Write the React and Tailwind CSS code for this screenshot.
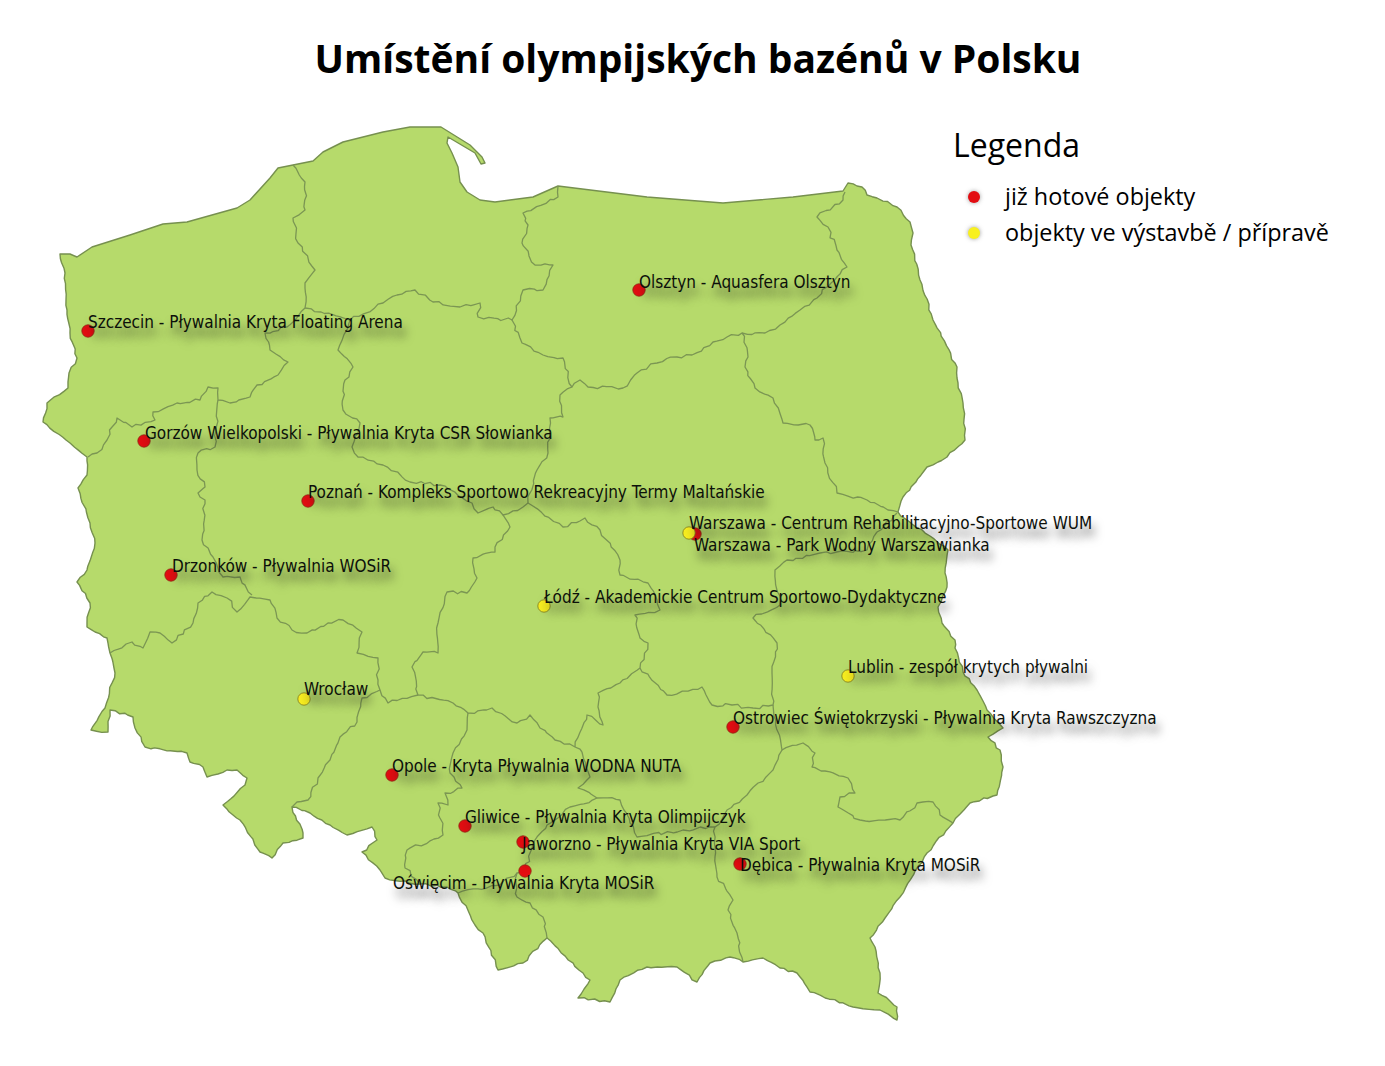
const coast =
  "60,254 70,254 77,257 92,247 130,235 163,224 187,222 237,208 250,200 270,178 278,168 293,165 313,161 323,152 343,142 383,132 410,127 441,127 470,145 482,157 485,163 481,164 475,153 448,137 447,143 452,153 458,167 460,182 467,192 480,200 495,202 533,197 558,186 647,197 723,203 793,197 843,191 848,183";

const land =
  "848,183 862,187 867,195 877,198 897,207 910,222 913,233 911,245 920,280 933,320 957,367 958,383 963,403 965,440 947,457 927,467 903,497 898,512 912,524 930,536 948,550 945,573 947,587 938,607 942,623 955,640 955,648 963,672 977,690 987,710 1003,728 988,737 1000,750 1003,767 997,795 970,803 953,823 927,853 900,897 870,938 875,947 880,973 878,993 897,1007 897,1020 880,1010 853,1007 810,992 797,973 780,968 763,958 743,962 730,957 710,963 697,982 677,967 647,967 620,980 610,1002 578,998 590,980 583,973 547,938 523,963 498,970 483,933 475,925 458,893 447,887 420,884 385,878 380,870 362,852 377,840 372,827 347,835 330,825 310,813 292,807 303,833 303,838 283,843 272,858 260,852 240,820 223,805 245,785 247,778 237,770 227,770 207,777 203,767 190,762 187,753 145,747 135,728 133,717 110,710 108,732 91,730 105,708 115,673 110,653 107,638 87,627 90,603 77,582 87,570 95,543 90,523 78,488 87,475 87,457 70,443 43,422 47,403 68,388 69,373 77,358 70,333 67,310 65,273 60,254";

const borders = [
  "293,165 305,182 305,210 293,218 298,243 315,270 305,283 305,308 287,327 265,333 270,350 288,362 278,375 257,385 250,397 230,403 218,400 218,388 208,387 200,400 177,403 153,412 155,420 132,427 117,418 107,440 97,453 88,457",
  "305,308 350,320 383,303 397,295 415,290 433,302 460,307 480,303 478,317 512,320 523,290 543,290 553,265 535,265 522,243 528,225 523,213 558,197 558,186",
  "512,320 522,343 543,355 563,358 572,387 580,380 588,387 623,388 637,373 657,363 677,357 692,355 713,342 727,337 742,333 765,333 780,325 800,310 817,298 847,267 837,250 828,227 817,217 843,200 845,192",
  "742,333 748,357 745,367 755,388 773,398 783,423 810,425 815,440 823,438 825,463 837,493 867,500 888,510 898,512",
  "572,387 560,395 563,417 550,418 548,453 537,470 528,503",
  "350,320 338,350 353,367 345,380 343,410 360,423 352,447 358,457 383,465 410,482 440,485 472,503 478,513 493,507 503,515 523,507 528,503",
  "503,515 510,527 495,547 495,552 473,558 477,578 467,593 447,592 438,623 438,653 423,652 412,667 418,695 453,703 468,713 492,708 517,723 530,715 540,728 555,740 575,747 582,752",
  "528,503 563,527 585,518 600,530 620,560 620,575 648,583 660,610 635,615 640,638 648,643 640,668 620,683 598,693 598,707 603,725 587,715 575,747",
  "640,668 667,695 702,687 712,705 732,705 753,708 773,705 772,673 777,643 753,618 780,605 775,570 787,560 820,553 867,550 877,532 897,513",
  "773,705 782,750 803,743 815,753 812,767 848,778 855,793 840,797 838,807 860,820 900,820 917,803 933,802 940,815 953,823",
  "782,750 773,770 747,795 727,810 715,827 715,857 717,877 733,900 728,910 737,933 743,962",
  "715,827 683,830 637,837 630,823 620,800 597,798 578,788 590,777 582,752",
  "468,713 467,730 453,753 450,773 462,788 445,793 448,805 438,803 443,835 407,850 405,868 420,884",
  "597,798 570,807 547,825 535,840 525,870 517,873 517,897 530,903 543,917 547,938",
  "517,873 500,885 458,893",
  "218,400 215,447 198,453 197,470 205,487 198,493 205,500 202,540 213,557 223,577 240,577 252,595",
  "110,653 132,642 143,648 150,632 160,633 172,643 193,623 198,603 212,592 227,598 237,612 250,597 270,600 277,618 292,630 307,633 328,623 343,620 362,632 357,653 378,658 378,680 380,690 388,703 418,695",
  "380,690 362,698 357,722 340,737 330,760 318,778 308,800 297,802 292,807",
];

const pins = [
  { x: 88, y: 331, c: "red" },
  { x: 144, y: 441, c: "red" },
  { x: 308, y: 501, c: "red" },
  { x: 171, y: 575, c: "red" },
  { x: 639, y: 290, c: "red" },
  { x: 695, y: 534, c: "red" },
  { x: 689, y: 533, c: "yellow" },
  { x: 544, y: 606, c: "yellow" },
  { x: 848, y: 676, c: "yellow" },
  { x: 304, y: 699, c: "yellow" },
  { x: 733, y: 727, c: "red" },
  { x: 392, y: 775, c: "red" },
  { x: 465, y: 826, c: "red" },
  { x: 523, y: 842, c: "red" },
  { x: 740, y: 864, c: "red" },
  { x: 525, y: 871, c: "red" },
];

const labels = [
  { x: 88, y: 322, t: "Szczecin - Pływalnia Kryta Floating Arena" },
  { x: 145, y: 433, t: "Gorzów Wielkopolski - Pływalnia Kryta CSR Słowianka" },
  { x: 308, y: 492, t: "Poznań - Kompleks Sportowo Rekreacyjny Termy Maltańskie" },
  { x: 172, y: 566, t: "Drzonków - Pływalnia WOSiR" },
  { x: 639, y: 282, t: "Olsztyn - Aquasfera Olsztyn" },
  { x: 689, y: 523, t: "Warszawa - Centrum Rehabilitacyjno-Sportowe WUM" },
  { x: 694, y: 545, t: "Warszawa - Park Wodny Warszawianka" },
  { x: 544, y: 597, t: "Łódź - Akademickie Centrum Sportowo-Dydaktyczne" },
  { x: 848, y: 667, t: "Lublin - zespół krytych pływalni" },
  { x: 304, y: 689, t: "Wrocław" },
  { x: 733, y: 718, t: "Ostrowiec Świętokrzyski - Pływalnia Kryta Rawszczyzna" },
  { x: 392, y: 766, t: "Opole - Kryta Pływalnia WODNA NUTA" },
  { x: 465, y: 817, t: "Gliwice - Pływalnia Kryta Olimpijczyk" },
  { x: 522, y: 844, t: "Jaworzno - Pływalnia Kryta VIA Sport" },
  { x: 740, y: 865, t: "Dębica - Pływalnia Kryta MOSiR" },
  { x: 393, y: 883, t: "Oświęcim - Pływalnia Kryta MOSiR" },
];

const MAP_TOP = 100;

// hand traced points get a small wobble so the borders don't look like straight segments
const parse = (s) => s.split(" ").map((p) => p.split(",").map(Number));

const rough = (pts, amp) => {
  const out = [pts[0]];
  let seed = pts[0][0] * 7 + pts[0][1] * 13;
  const next = () => {
    seed = (seed * 9301 + 49297) % 233280;
    return seed / 233280 - 0.5;
  };
  for (let i = 1; i < pts.length; i++) {
    const [ax, ay] = pts[i - 1];
    const [bx, by] = pts[i];
    const steps = Math.max(1, Math.round(Math.hypot(bx - ax, by - ay) / 5));
    for (let k = 1; k < steps; k++) {
      const f = k / steps;
      out.push([ax + (bx - ax) * f + next() * amp, ay + (by - ay) * f + next() * amp]);
    }
    out.push(pts[i]);
  }
  return out;
};

const toPath = (pts) => pts.map((p, i) => `${i ? "L" : "M"}${p[0].toFixed(1)} ${p[1].toFixed(1)}`).join(" ");

const outline = toPath([...parse(coast), ...rough(parse(land), 2.2).slice(1)]) + " Z";

const PolandMap = () => (
  <svg className="absolute left-0 top-0 overflow-visible" width="953" height="966" viewBox="0 100 953 966">
    <path d={outline} fill="#b6da6b" stroke="#76904f" strokeWidth="1.4" strokeLinejoin="round" />
    {borders.map((b, i) => (
      <path key={i} d={toPath(rough(parse(b), 3.2))} fill="none" stroke="#7b9653" strokeWidth="1.3" strokeLinejoin="round" />
    ))}
    {pins.map((p, i) => (
      <circle
        key={i}
        cx={p.x}
        cy={p.y}
        r="6.2"
        fill={p.c === "red" ? "#e30d12" : "#f8ee20"}
        stroke={p.c === "red" ? "#8f2a14" : "#7d7a20"}
        strokeWidth="0.8"
      />
    ))}
  </svg>
);

const Label = ({ x, y, t }) => (
  <span
    className="absolute -translate-y-1/2 whitespace-nowrap font-['DejaVu_Sans_Condensed','DejaVu_Sans',sans-serif] text-[17px] leading-5 text-[#0c100a] [text-shadow:3px_9px_10px_rgba(20,20,20,0.6)]"
    style={{ left: x, top: y - MAP_TOP }}
  >
    {t}
  </span>
);

const LegendItem = ({ dot, children }) => (
  <div className="flex h-9 items-center gap-[25px]">
    <span className={`ml-[15px] h-3 w-3 rounded-full shadow-[0_0_4px_rgba(60,60,60,0.5)] ${dot}`} />
    <span className="whitespace-nowrap text-[23.4px]">{children}</span>
  </div>
);

export default function App() {
  return (
    <div className="flex h-[1066px] w-[1385px] flex-col overflow-hidden bg-white font-['Open_Sans',sans-serif] text-black">
      <h1 className="flex h-[100px] items-center justify-center pl-[11px] pt-[16px] text-[39px] font-bold">
        Umístění olympijských bazénů v Polsku
      </h1>
      <div className="flex flex-1">
        <div className="relative w-[953px] shrink-0">
          <PolandMap />
          {labels.map((l) => (
            <Label key={l.t} {...l} />
          ))}
        </div>
        <div className="relative flex flex-col pt-[22px]">
          <h2 className="mb-[11px] text-[32px] leading-[46px]">Legenda</h2>
          <LegendItem dot="bg-[#e30d12]">již hotové objekty</LegendItem>
          <LegendItem dot="bg-[#f8f020]">objekty ve výstavbě / přípravě</LegendItem>
        </div>
      </div>
    </div>
  );
}
